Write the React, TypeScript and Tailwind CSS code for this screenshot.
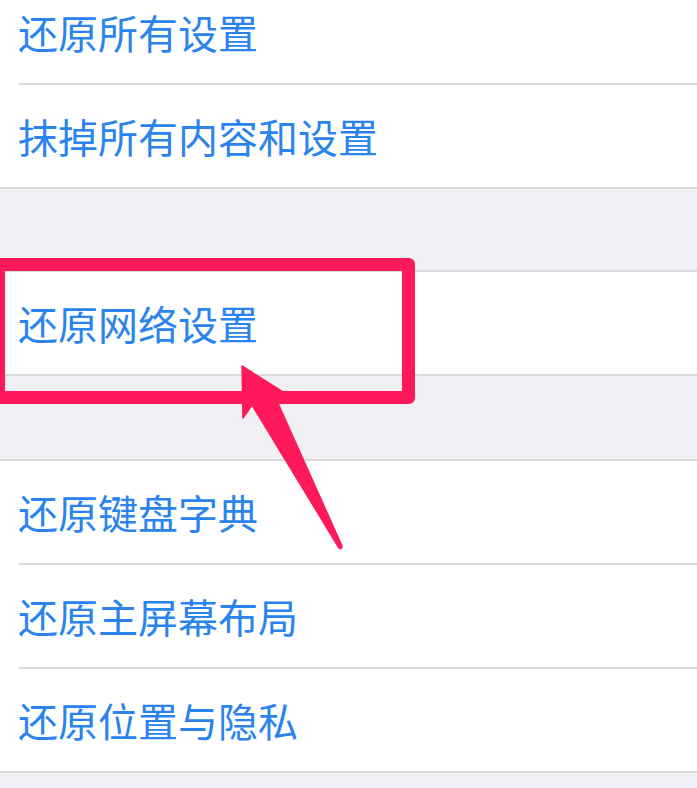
import React from "react";

const font = { fontFamily: '"Noto Sans CJK SC", "Noto Sans", sans-serif' };

function Row({ label }: { label: string }) {
  return (
    <div className="h-[102px] bg-white flex items-center pl-[18px]">
      <span className="text-[40px] leading-none text-[#2b84ee] tracking-[0px]">{label}</span>
    </div>
  );
}

function Sep() {
  return (
    <div className="h-[2px] bg-white">
      <div className="ml-[19px] h-full bg-[#dcdce0]" />
    </div>
  );
}

function Border() {
  return <div className="h-[2px] bg-[#d8d8dd]" />;
}

export default function App() {
  return (
    <div className="relative w-[697px] h-[788px] overflow-hidden bg-[#efeff4]" style={font}>
      <div className="-mt-[19px] flex flex-col">
        <Row label="还原所有设置" />
        <Sep />
        <Row label="抹掉所有内容和设置" />
        <Border />
        <div className="h-[81px] bg-[#efeff4]" />
        <Border />
        <Row label="还原网络设置" />
        <Border />
        <div className="h-[83px] bg-[#efeff4]" />
        <Border />
        <Row label="还原键盘字典" />
        <Sep />
        <Row label="还原主屏幕布局" />
        <Sep />
        <Row label="还原位置与隐私" />
        <Border />
      </div>

      <div className="absolute left-[-8px] top-[258px] w-[423px] h-[146px] border-[13px] border-[#fe1a5a] rounded-[6px]" />

      <svg className="absolute left-0 top-0" width="697" height="788" viewBox="0 0 697 788">
        <path
          d="M242 366 L283 392 L277 401 L342 546 Q342 550 339 548 L252 405 L243 418 Z"
          fill="#fe1a5a"
          stroke="#fe1a5a"
          strokeWidth="1.5"
          strokeLinejoin="round"
        />
      </svg>
    </div>
  );
}
